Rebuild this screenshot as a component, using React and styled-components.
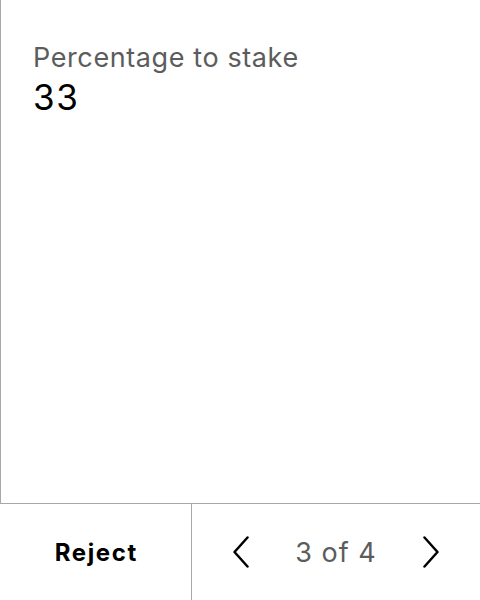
import React from "react";
import styled, { createGlobalStyle } from "styled-components";

const Global = createGlobalStyle`
  html, body { margin: 0; padding: 0; background: #fff; }
  body { font-family: Inter, "Noto Sans", sans-serif; }
`;

const Screen = styled.div`
  width: 480px;
  height: 600px;
  display: flex;
  flex-direction: column;
  box-sizing: border-box;
  background: #fff;
`;

const Body = styled.div`
  flex: 1;
  border-left: 1px solid #a8a8a8;
  padding: 40px 0 0 32px;
  display: flex;
  flex-direction: column;
  gap: 0;
`;

const Label = styled.div`
  font-size: 27px;
  letter-spacing: 0.6px;
  color: #5c5c5c;
  line-height: 36px;
`;

const Value = styled.div`
  font-size: 35px;
  letter-spacing: 1.6px;
  color: #000;
  line-height: 43px;
`;

const Footer = styled.div`
  height: 96px;
  border-top: 1px solid #a8a8a8;
  display: grid;
  grid-template-columns: 192px 1fr;
`;

const RejectButton = styled.button`
  border: none;
  border-right: 1px solid #a8a8a8;
  background: none;
  font-family: Inter, sans-serif;
  font-weight: 700;
  font-size: 24px;
  letter-spacing: 1.6px;
  text-indent: 1.6px;
  color: #000;
  padding: 0;
`;

const Pager = styled.div`
  display: flex;
  align-items: center;
  justify-content: center;
  gap: 46px;
`;

const Arrow = styled.button`
  border: none;
  background: none;
  padding: 0;
  display: flex;
`;

const Count = styled.span`
  font-size: 27px;
  letter-spacing: 1px;
  color: #5c5c5c;
`;

const Chevron = ({ dir }) => (
  <svg width="16" height="32" viewBox="0 0 16 32" fill="none">
    <path
      d={dir === "left" ? "M14.5 1.5 L1.5 16 L14.5 30.5" : "M1.5 1.5 L14.5 16 L1.5 30.5"}
      stroke="#000"
      strokeWidth="2.5"
      strokeLinecap="round"
      strokeLinejoin="round"
    />
  </svg>
);

export default function App() {
  return (
    <>
      <Global />
      <Screen>
        <Body>
          <Label>Percentage to stake</Label>
          <Value>33</Value>
        </Body>
        <Footer>
          <RejectButton>Reject</RejectButton>
          <Pager>
            <Arrow><Chevron dir="left" /></Arrow>
            <Count>3 of 4</Count>
            <Arrow><Chevron dir="right" /></Arrow>
          </Pager>
        </Footer>
      </Screen>
    </>
  );
}
